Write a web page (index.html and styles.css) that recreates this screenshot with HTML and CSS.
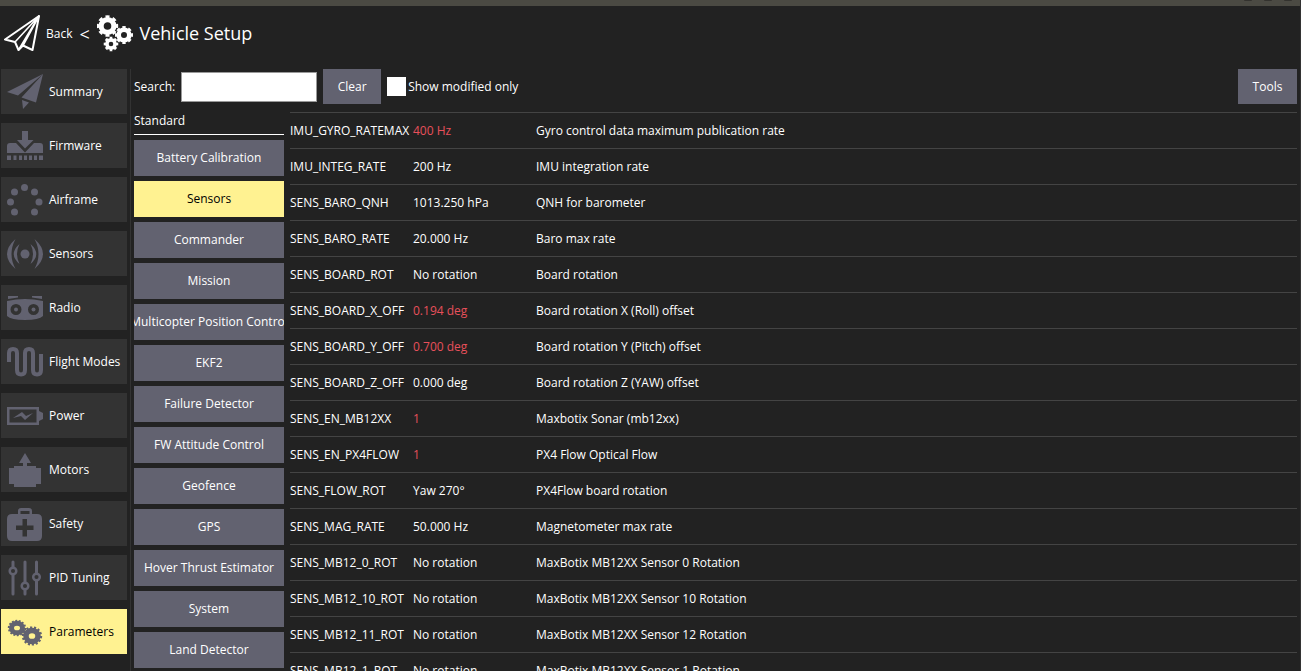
FILE: index.html
```html
<!DOCTYPE html>
<html lang="en">
<head>
<meta charset="utf-8">
<title>Vehicle Setup</title>
<link rel="stylesheet" href="styles.css">
</head>
<body>
<div class="app">
  <div class="window-edge"><i></i><i></i><i></i></div>
  <header class="header">
    <a class="back" href="#">
      <svg class="icon-plane" viewBox="0 0 36 37" fill="none" stroke="#fff" stroke-width="1.6" stroke-linejoin="round"><path d="M35 1 1 24.500 11 27 14.500 35 19 30.500 28.500 35Z" stroke-width="2"/><path d="M35 1 11 27M35 1 14.500 35M35 1 19 30.500"/></svg>
      <span>Back</span>
      <span class="chevron">&lt;</span>
    </a>
    <svg class="icon-gears" viewBox="0 0 36 37" fill="none" stroke="#fff">
      <g stroke-width="5.200"><circle cx="10.500" cy="11" r="6.400"/><circle cx="10.500" cy="11" r="9.200" pathLength="16" stroke-dasharray="1.100 0.900" stroke-dashoffset="0.550" stroke-width="3"/></g>
      <g stroke-width="4.600"><circle cx="27" cy="20" r="5.300"/><circle cx="27" cy="20" r="7.600" pathLength="16" stroke-dasharray="1.100 0.900" stroke-dashoffset="0.550" stroke-width="2.800"/></g>
      <g stroke-width="3.600"><circle cx="14" cy="29" r="4.100"/><circle cx="14" cy="29" r="6.100" pathLength="16" stroke-dasharray="1.100 0.900" stroke-dashoffset="0.550" stroke-width="2.400"/></g>
    </svg>
    <h1 class="title">Vehicle Setup</h1>
  </header>
  <div class="body">
    <nav class="nav">
      <button class="nav-item"><svg viewBox="0 0 36 36"><path d="M36 0 0 18 11 21.500ZM36 0 14.500 23.500 29 28.500ZM15 26 22 28.500 16 35Z"/></svg>Summary</button>
      <button class="nav-item"><svg viewBox="0 0 36 36"><path d="M15 3H21V12H26.500L18 20.500 10 12H15Z"/><path d="M0 25V18Q0 15 3 15H9L18 24.500 27 15H33Q36 15 36 18V25ZM0 27.500H4V32H0ZM6.500 27.500H9.500V32H6.500ZM12 27.500H15V32H12ZM17 27.500H20V32H17ZM22 27.500H25V32H22ZM27 27.500H30V32H27ZM32 27.500H36V32H32Z"/></svg>Firmware</button>
      <button class="nav-item"><svg viewBox="0 0 36 36"><circle cx="17.500" cy="5.500" r="3.500"/><circle cx="7.500" cy="10" r="3.500"/><circle cx="27.500" cy="10" r="3.500"/><circle cx="3.500" cy="20" r="3.500"/><circle cx="32" cy="20" r="3.500"/><circle cx="7.500" cy="30" r="3.500"/><circle cx="27.500" cy="30" r="3.500"/></svg>Airframe</button>
      <button class="nav-item"><svg viewBox="0 0 36 36"><circle cx="18" cy="18" r="4.500"/><path d="M8.500 3Q-8.500 18 8.500 33Q0.500 18 8.500 3ZM27.500 3Q44.500 18 27.500 33Q35.500 18 27.500 3ZM12.500 8Q1 18 12.500 28Q7.500 18 12.500 8ZM23.500 8Q35 18 23.500 28Q28.500 18 23.500 8Z"/></svg>Sensors</button>
      <button class="nav-item"><svg viewBox="0 0 36 36"><path d="M1 6H11V7.500L1 9ZM25 6H35V9L25 7.500Z"/><path fill-rule="evenodd" d="M0 11Q18 7 36 11V26Q32 30 18 30 4 30 0 26ZM9 14A5.500 5.500 0 1 0 9 25 5.500 5.500 0 1 0 9 14ZM26.500 14A5.500 5.500 0 1 0 26.500 25 5.500 5.500 0 1 0 26.500 14Z"/><circle cx="9" cy="19.500" r="2"/><circle cx="26.500" cy="19.500" r="2"/></svg>Radio</button>
      <button class="nav-item"><svg class="outlined" viewBox="0 0 36 36"><path stroke-width="4" d="M2 18V9Q2 5 6 5T10 9V26Q10 30.500 14 30.500T18 26V9Q18 5 22 5T26 9V26Q26 30.500 30 30.500T34 26V10"/></svg>Flight Modes</button>
      <button class="nav-item"><svg viewBox="0 0 36 36"><path fill-rule="evenodd" d="M0 9H32V13L36 15V21L32 23V27H0ZM2.500 11.500V24.500H29.500V11.500Z"/><path d="M6 20 15 14 19 18 26 15 18 22 14 18Z"/></svg>Power</button>
      <button class="nav-item"><svg viewBox="0 0 36 36"><path d="M18 1 24 11H20V14H29V16H34V32H29V35H7V32H2V16H7V14H16V11H12Z"/></svg>Motors</button>
      <button class="nav-item"><svg viewBox="0 0 36 36"><path fill-rule="evenodd" d="M11 8V5Q11 2 14 2H22Q25 2 25 5V8H30Q35 8 35 13V30Q35 35 30 35H5Q0 35 0 30V13Q0 8 5 8ZM13.500 8H22.500V5H13.500ZM15.500 13V19.500H9V24H15.500V30.500H20V24H26.500V19.500H20V13Z"/></svg>Safety</button>
      <button class="nav-item"><svg class="outlined" viewBox="0 0 36 36"><path stroke-width="3" stroke-linecap="round" d="M6 2V7M6 15V34M18 2V22M18 30V34M29.500 2V13M29.500 21V34"/><g stroke-width="2.500"><circle cx="6" cy="11" r="3.300"/><circle cx="18" cy="26" r="3.300"/><circle cx="29.500" cy="17" r="3.300"/></g></svg>PID Tuning</button>
      <button class="nav-item selected"><svg class="outlined" viewBox="0 0 36 36"><ellipse cx="10" cy="14" rx="5.500" ry="4.800" stroke-width="5"/><ellipse cx="10" cy="14" rx="8" ry="7" pathLength="28" stroke-dasharray="1.100 0.900" stroke-width="2.400"/><ellipse cx="25" cy="22" rx="6" ry="5.600" stroke-width="5.500"/><ellipse cx="25" cy="22" rx="9" ry="8.400" pathLength="28" stroke-dasharray="1.100 0.900" stroke-width="2.400"/></svg>Parameters</button>
    </nav>
    <main class="main">
      <div class="toolbar">
        <label for="search">Search:</label>
        <input class="search" id="search" type="text">
        <button class="btn clear">Clear</button>
        <label class="check"><input type="checkbox">Show modified only</label>
        <button class="btn tools">Tools</button>
      </div>
      <div class="panes">
        <section class="groups">
          <h2 class="group-title">Standard</h2>
          <button class="btn group"><span>Battery Calibration</span></button>
          <button class="btn group selected"><span>Sensors</span></button>
          <button class="btn group"><span>Commander</span></button>
          <button class="btn group"><span>Mission</span></button>
          <button class="btn group"><span>Multicopter Position Control</span></button>
          <button class="btn group"><span>EKF2</span></button>
          <button class="btn group"><span>Failure Detector</span></button>
          <button class="btn group"><span>FW Attitude Control</span></button>
          <button class="btn group"><span>Geofence</span></button>
          <button class="btn group"><span>GPS</span></button>
          <button class="btn group"><span>Hover Thrust Estimator</span></button>
          <button class="btn group"><span>System</span></button>
          <button class="btn group"><span>Land Detector</span></button>
        </section>
        <div class="params">
          <table class="table">
            <colgroup><col class="col-name"><col class="col-value"><col></colgroup>
            <tbody>
            <tr><td>IMU_GYRO_RATEMAX</td><td class="modified">400 Hz</td><td>Gyro control data maximum publication rate</td></tr>
            <tr><td>IMU_INTEG_RATE</td><td>200 Hz</td><td>IMU integration rate</td></tr>
            <tr><td>SENS_BARO_QNH</td><td>1013.250 hPa</td><td>QNH for barometer</td></tr>
            <tr><td>SENS_BARO_RATE</td><td>20.000 Hz</td><td>Baro max rate</td></tr>
            <tr><td>SENS_BOARD_ROT</td><td>No rotation</td><td>Board rotation</td></tr>
            <tr><td>SENS_BOARD_X_OFF</td><td class="modified">0.194 deg</td><td>Board rotation X (Roll) offset</td></tr>
            <tr><td>SENS_BOARD_Y_OFF</td><td class="modified">0.700 deg</td><td>Board rotation Y (Pitch) offset</td></tr>
            <tr><td>SENS_BOARD_Z_OFF</td><td>0.000 deg</td><td>Board rotation Z (YAW) offset</td></tr>
            <tr><td>SENS_EN_MB12XX</td><td class="modified">1</td><td>Maxbotix Sonar (mb12xx)</td></tr>
            <tr><td>SENS_EN_PX4FLOW</td><td class="modified">1</td><td>PX4 Flow Optical Flow</td></tr>
            <tr><td>SENS_FLOW_ROT</td><td>Yaw 270°</td><td>PX4Flow board rotation</td></tr>
            <tr><td>SENS_MAG_RATE</td><td>50.000 Hz</td><td>Magnetometer max rate</td></tr>
            <tr><td>SENS_MB12_0_ROT</td><td>No rotation</td><td>MaxBotix MB12XX Sensor 0 Rotation</td></tr>
            <tr><td>SENS_MB12_10_ROT</td><td>No rotation</td><td>MaxBotix MB12XX Sensor 10 Rotation</td></tr>
            <tr><td>SENS_MB12_11_ROT</td><td>No rotation</td><td>MaxBotix MB12XX Sensor 12 Rotation</td></tr>
            <tr><td>SENS_MB12_1_ROT</td><td>No rotation</td><td>MaxBotix MB12XX Sensor 1 Rotation</td></tr>
            </tbody>
          </table>
        </div>
      </div>
    </main>
  </div>
</div>
</body>
</html>
```
FILE: styles.css
```css
* { box-sizing: border-box; }

body {
  margin: 0;
  background: #222;
  color: #fff;
  font: 12px/18px "Open Sans", "Noto Sans", sans-serif;
}

button, input { font: inherit; color: inherit; }

.app {
  display: flex;
  flex-direction: column;
  height: 100vh;
  overflow: hidden;
  border-right: 1px solid #333;
}

.window-edge {
  display: flex;
  flex: none;
  justify-content: flex-end;
  gap: 12px;
  height: 6px;
  padding-right: 8px;
  background: #4b4a43;
}

.window-edge i { width: 8px; height: 1px; border-radius: 0 0 4px 4px; background: #33322e; }

.header {
  display: flex;
  flex: none;
  align-items: center;
  gap: 6px;
  height: 63px;
  padding: 0 4px 8px;
}

.back {
  display: flex;
  align-items: center;
  gap: 6px;
  color: #fff;
  text-decoration: none;
}

.chevron { width: 12px; margin-left: 1px; font-size: 18px; }
.icon-plane, .icon-gears { width: 36px; height: 37px; }
.title { margin: 0; font-size: 18px; font-weight: 400; line-height: 24px; padding-bottom: 2px; }

.body { display: flex; flex: 1; min-height: 0; }

.nav {
  display: flex;
  flex: none;
  flex-direction: column;
  gap: 9px;
  width: 131px;
  padding: 0 3px 0 1px;
  border-right: 1px solid #333;
}

.nav-item {
  display: flex;
  flex: none;
  align-items: center;
  gap: 6px;
  height: 45px;
  padding: 0 6px;
  border: 0;
  background: #333;
  white-space: nowrap;
}

.nav-item svg { flex: none; width: 36px; height: 36px; fill: #626270; }
.nav-item .outlined { fill: none; stroke: #626270; }

.nav-item.selected, .btn.selected { background: #fff291; color: #000; }

.main {
  display: flex;
  flex: 1;
  flex-direction: column;
  gap: 8px;
  min-width: 0;
  padding: 0 3px;
}

.toolbar { display: flex; flex: none; align-items: center; gap: 6px; height: 35px; }

.search {
  width: 136px;
  height: 30px;
  padding: 0 6px;
  border: 1px solid #999;
  background: #fff;
  color: #000;
}

.btn {
  height: 35px;
  padding: 0;
  border: 0;
  background: #626270;
  color: #fff;
}

.clear { width: 58px; }
.tools { width: 59px; margin-left: auto; }

.check { display: flex; align-items: center; gap: 2px; }
.check input { appearance: none; width: 19px; height: 19px; margin: 0; background: #fff; }

.panes { display: flex; flex: 1; gap: 6px; min-height: 0; }

.groups {
  display: flex;
  flex: none;
  flex-direction: column;
  gap: 5px;
  width: 150px;
  overflow: hidden;
}

.group-title {
  flex: none;
  height: 23px;
  margin: 0;
  border-bottom: 1px solid #fff;
  font-size: 12px;
  font-weight: 400;
  line-height: 18px;
}

.btn.group {
  display: flex;
  flex: none;
  align-items: center;
  justify-content: center;
  height: 36px;
  overflow: hidden;
  white-space: nowrap;
}

.params { flex: 1; min-width: 0; overflow: hidden; }

.table { width: 100%; border-spacing: 0; table-layout: fixed; }
.col-name, .col-value { width: 123px; }
.table td { height: 36px; padding: 0; border-top: 1px solid #444; white-space: nowrap; }
.table .modified { color: #e8505b; }
```
